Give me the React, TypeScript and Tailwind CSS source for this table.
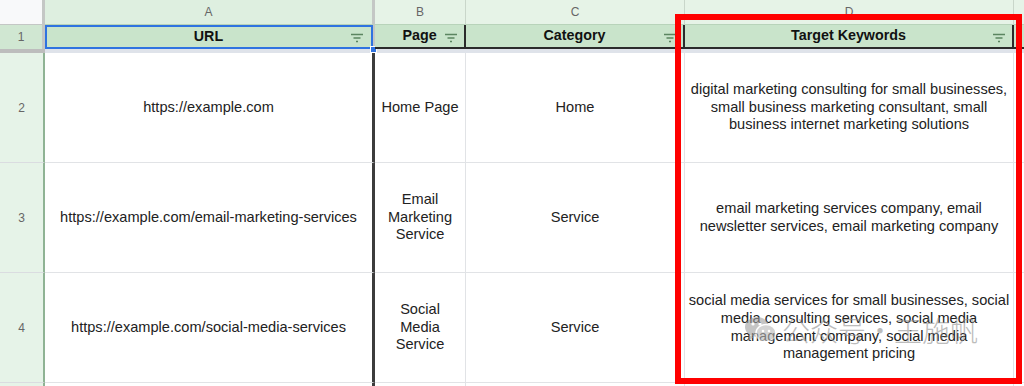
import React from 'react'

const FilterIcon = () => (
  <svg width="14" height="10" viewBox="0 0 14 10" className="shrink-0">
    <path d="M1 1.5h12M3.5 5h7M6 8.5h2" stroke="#5b8560" strokeWidth="1.4" />
  </svg>
)

const rows = [
  {
    n: 2,
    url: 'https://example.com',
    page: 'Home Page',
    cat: 'Home',
    kw: 'digital marketing consulting for small businesses, small business marketing consultant, small business internet marketing solutions',
  },
  {
    n: 3,
    url: 'https://example.com/email-marketing-services',
    page: 'Email Marketing Service',
    cat: 'Service',
    kw: 'email marketing services company, email newsletter services, email marketing company',
  },
  {
    n: 4,
    url: 'https://example.com/social-media-services',
    page: 'Social Media Service',
    cat: 'Service',
    kw: 'social media services for small businesses, social media consulting services, social media management company, social media management pricing',
  },
]

const HeaderCell = ({ label }: { label: string }) => (
  <div className="relative flex items-center justify-center bg-[#c9e4cb] border-b-[2px] border-b-[#2b2b2b] border-r-[2px] border-r-[#2b2b2b]">
    <span className="font-bold text-[14.3px] text-[#111]">{label}</span>
    <span className="absolute right-[6px] top-[8px]">
      <FilterIcon />
    </span>
  </div>
)

export default function App() {
  return (
    <div
      className="relative w-[1024px] h-[386px] overflow-hidden bg-white text-[#222]"
      style={{ fontFamily: '"Liberation Sans", Arial, sans-serif' }}
    >
      <div className="grid grid-cols-[45px_330px_91px_219px_329px_10px] grid-rows-[25px_24px_4px_110px_110px_110px_3px]">
        {/* column letters */}
        <div className="bg-[#f8f9fa] border-r-[3px] border-r-[#c4c7c5] border-b border-b-[#c4c7c5]" />
        <div className="flex items-center justify-center bg-[#deefe0] border-r-[3px] border-r-[#c4c7c5] border-b border-b-[#b8d3ba] text-[12px] text-[#666]">A</div>
        <div className="flex items-center justify-center bg-[#e6f3e7] border-r border-r-[#c9d6ca] border-b border-b-[#b8d3ba] text-[12px] text-[#666]">B</div>
        <div className="flex items-center justify-center bg-[#e6f3e7] border-r border-r-[#c9d6ca] border-b border-b-[#b8d3ba] text-[12px] text-[#666]">C</div>
        <div className="flex items-center justify-center bg-[#e6f3e7] border-r border-r-[#c9d6ca] border-b border-b-[#b8d3ba] text-[12px] text-[#666]">D</div>
        <div className="bg-[#e6f3e7] border-b border-b-[#b8d3ba]" />

        {/* row 1 */}
        <div className="flex items-center justify-center bg-[#d0e7d2] border-r-[3px] border-r-[#c4c7c5] text-[12px] text-[#666]">1</div>
        <div className="relative flex items-center justify-center bg-[#c9e4cb] border-r-[3px] border-r-[#c4c7c5]">
          <div className="absolute left-0 top-0 right-[-1px] bottom-0 border-2 border-[#2f73e0]" />
          <span className="font-bold text-[14.3px] text-[#111]">URL</span>
          <span className="absolute right-[8px] top-[8px]">
            <FilterIcon />
          </span>
          <div className="absolute right-[-5px] bottom-[-4px] w-[7px] h-[7px] bg-[#2f73e0] border border-white" />
        </div>
        <HeaderCell label="Page" />
        <HeaderCell label="Category" />
        <HeaderCell label="Target Keywords" />
        <div className="bg-[#c9e4cb] border-b-[2px] border-b-[#2b2b2b]" />

        {/* frozen row divider */}
        <div className="bg-[#bdbdbd]" />
        <div className="bg-[#dfe3ea] border-r-[3px] border-r-[#3c3c3c]" />
        <div className="bg-[#dfe3ea]" />
        <div className="bg-[#dfe3ea]" />
        <div className="bg-[#dfe3ea]" />
        <div className="bg-[#dfe3ea]" />

        {rows.map((r) => (
          <React.Fragment key={r.n}>
            <div className="flex items-center justify-center bg-[#e6f3e8] border-r-2 border-r-[#8fb394] border-b border-b-[#dadce0] text-[12px] text-[#666]">
              {r.n}
            </div>
            <div className="flex items-center justify-center border-r-[3px] border-r-[#3c3c3c] border-b border-b-[#e1e3e6] text-[14.6px]">
              {r.url}
            </div>
            <div className="flex items-center justify-center px-[6px] text-center border-r border-r-[#e1e3e6] border-b border-b-[#e1e3e6] text-[14.6px] leading-[17.7px]">
              {r.page}
            </div>
            <div className="flex items-center justify-center border-r border-r-[#e1e3e6] border-b border-b-[#e1e3e6] text-[14.6px]">
              {r.cat}
            </div>
            <div className="flex items-center justify-center px-[3px] text-center border-r border-r-[#e1e3e6] border-b border-b-[#e1e3e6] text-[14.6px] leading-[17.7px]">
              {r.kw}
            </div>
            <div className="border-b border-b-[#e1e3e6]" />
          </React.Fragment>
        ))}

        <div className="bg-[#e6f3e8] border-r-2 border-r-[#8fb394]" />
        <div className="border-r-[3px] border-r-[#3c3c3c]" />
        <div className="border-r border-r-[#e1e3e6]" />
        <div className="border-r border-r-[#e1e3e6]" />
        <div className="border-r border-r-[#e1e3e6]" />
        <div />
      </div>

      {/* red highlight box */}
      <div className="absolute left-[675px] top-[14px] w-[347px] h-[370px] border-[6px] border-[#ff0000] pointer-events-none" />

      {/* watermark */}
      <div className="absolute left-[744px] top-[315px] flex items-center gap-[4px] whitespace-nowrap opacity-60 pointer-events-none text-[#909090]">
        <svg width="34" height="30" viewBox="0 0 34 30">
          <ellipse cx="13" cy="12" rx="12" ry="10" fill="#a0a0a0" />
          <path d="M5 20l-1 6 6-4z" fill="#a0a0a0" />
          <ellipse cx="22" cy="18" rx="10" ry="8.5" fill="#b8b8b8" stroke="#fff" strokeWidth="1.5" />
          <circle cx="9" cy="9" r="1.6" fill="#fff" />
          <circle cx="16" cy="9" r="1.6" fill="#fff" />
          <circle cx="19" cy="16" r="1.3" fill="#fff" />
          <circle cx="25" cy="16" r="1.3" fill="#fff" />
        </svg>
        <span
          className="text-[28px] leading-none"
          style={{ fontFamily: '"Noto Sans CJK SC", sans-serif', fontWeight: 300 }}
        >
          公众号·王施帆
        </span>
      </div>
    </div>
  )
}
